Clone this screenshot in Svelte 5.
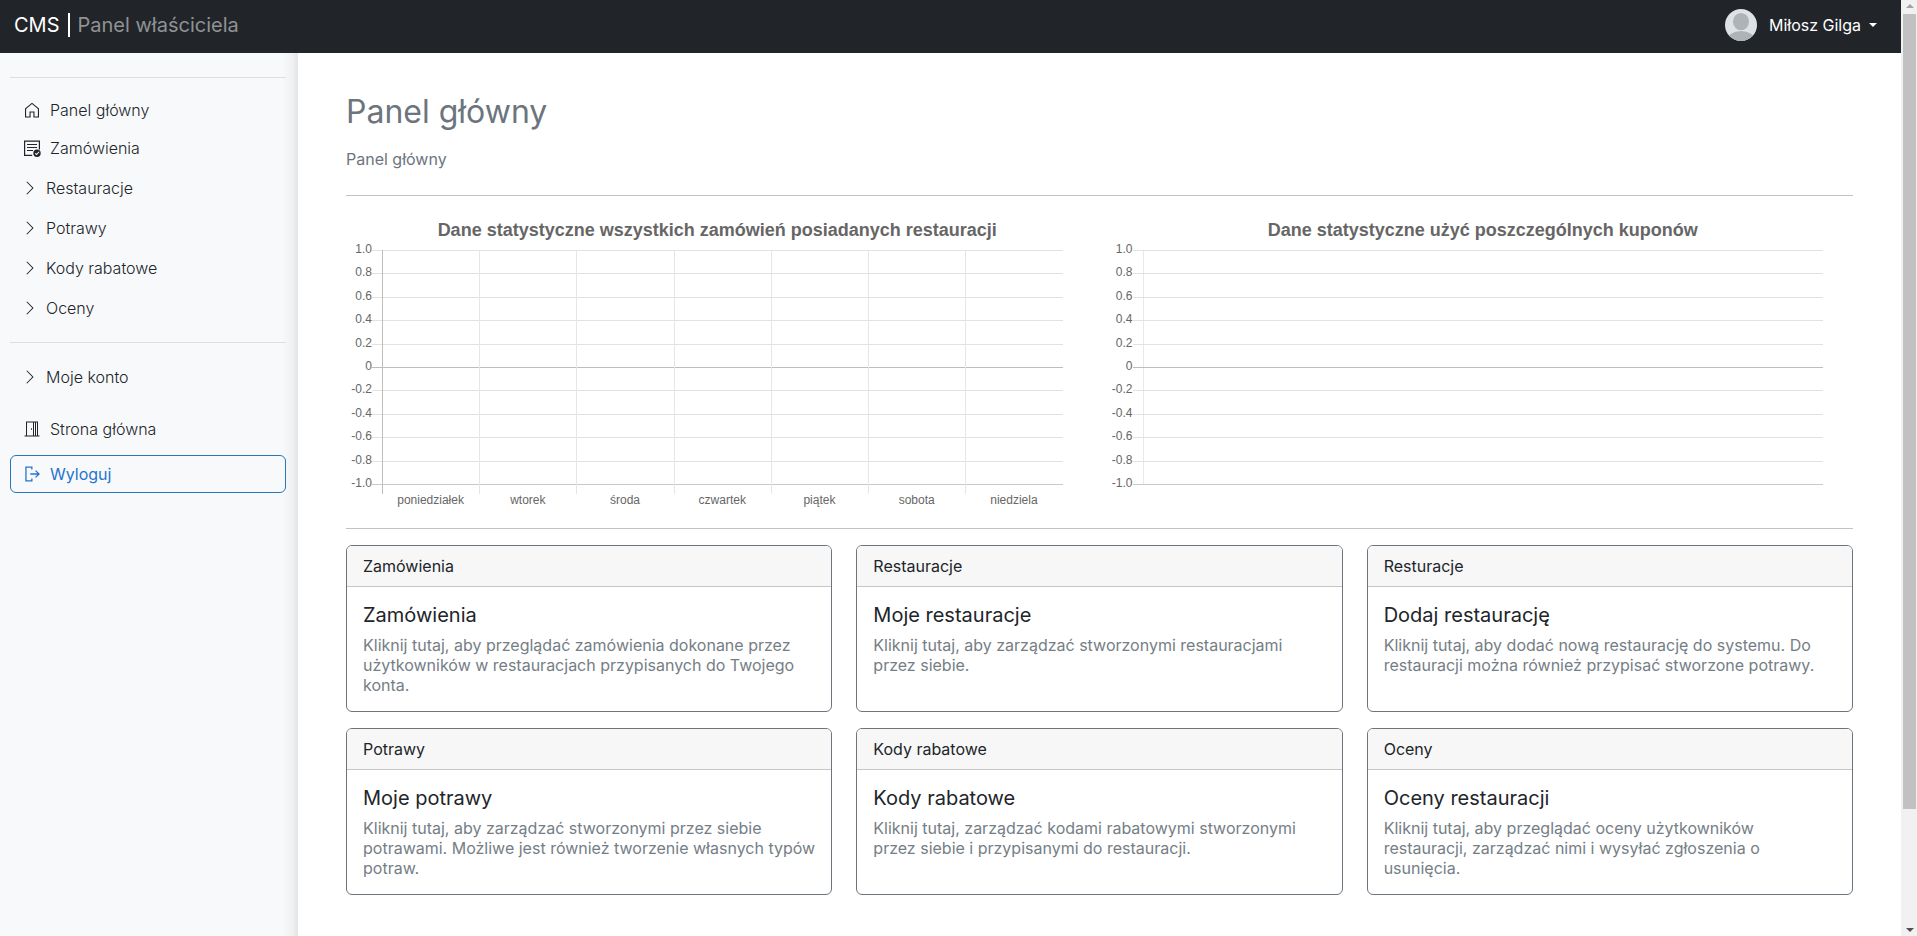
<script>
  const mainLinks = [
    { label: 'Panel główny', icon: 'home' },
    { label: 'Zamówienia', icon: 'orders' }
  ];
  const groups = ['Restauracje', 'Potrawy', 'Kody rabatowe', 'Oceny'];

  const ticks = ['1.0', '0.8', '0.6', '0.4', '0.2', '0', '-0.2', '-0.4', '-0.6', '-0.8', '-1.0'];
  const charts = [
    {
      title: 'Dane statystyczne wszystkich zamówień posiadanych restauracji',
      days: ['poniedziałek', 'wtorek', 'środa', 'czwartek', 'piątek', 'sobota', 'niedziela']
    },
    { title: 'Dane statystyczne użyć poszczególnych kuponów', days: [] }
  ];

  const cards = [
    {
      head: 'Zamówienia',
      title: 'Zamówienia',
      text: 'Kliknij tutaj, aby przeglądać zamówienia dokonane przez użytkowników w restauracjach przypisanych do Twojego konta.'
    },
    {
      head: 'Restauracje',
      title: 'Moje restauracje',
      text: 'Kliknij tutaj, aby zarządzać stworzonymi restauracjami przez siebie.'
    },
    {
      head: 'Resturacje',
      title: 'Dodaj restaurację',
      text: 'Kliknij tutaj, aby dodać nową restaurację do systemu. Do restauracji można również przypisać stworzone potrawy.'
    },
    {
      head: 'Potrawy',
      title: 'Moje potrawy',
      text: 'Kliknij tutaj, aby zarządzać stworzonymi przez siebie potrawami. Możliwe jest również tworzenie własnych typów potraw.'
    },
    {
      head: 'Kody rabatowe',
      title: 'Kody rabatowe',
      text: 'Kliknij tutaj, zarządzać kodami rabatowymi stworzonymi przez siebie i przypisanymi do restauracji.'
    },
    {
      head: 'Oceny',
      title: 'Oceny restauracji',
      text: 'Kliknij tutaj, aby przeglądać oceny użytkowników restauracji, zarządzać nimi i wysyłać zgłoszenia o usunięcia.'
    }
  ];
</script>

{#snippet icon(name)}
  <svg class="icon" viewBox="0 0 16 16" fill="currentColor" aria-hidden="true">
    {#if name === 'home'}
      <path d="M8 .7 1 6.6V15.6H6.6V10.6H9.4V15.6H15V6.600ZM8 2.1 13.900 7.100V14.500H10.500V9.500H5.500V14.500H2.100V7.100Z" fill-rule="evenodd" />
    {:else if name === 'orders'}
      <path d="M0 .5h16v9h-1.200v-7.800h-13.600v13h7v1.200h-8.200zM3 4h10v1H3zM3 7h10v1H3zM3 10h6v1H3z" />
      <path d="M13 9.500a3.700 3.700 0 1 1 0 7.400 3.700 3.700 0 0 1 0-7.400m1.700 2-2.100 2.300-1-.9-.7.8 1.700 1.500 2.900-3.100z" fill-rule="evenodd" />
    {:else if name === 'chevron'}
      <path d="M4.646 1.646a.5.5 0 0 1 .708 0l6 6a.5.5 0 0 1 0 .708l-6 6a.5.5 0 0 1-.708-.708L10.293 8 4.646 2.354a.5.5 0 0 1 0-.708" />
    {:else if name === 'door'}
      <path d="M2 .5h12V14.500h1.500v1H.5v-1H2ZM3 14.500h6V1.500H3ZM10 14.500h1V1.500h-1ZM12 14.500h1V1.500h-1Z" fill-rule="evenodd" />
      <path d="M7 7.200h1v1.600H7z" />
    {:else if name === 'exit'}
      <path d="M8.500 .4H1.300v15.200h7.200v-3.200H7.200v1.900H2.600V1.700h4.600v1.900h1.300zM12 4.200 16 8l-4 3.800-.9-.9 2.200-2.200H6.300V7.300h7l-2.200-2.200z" />
    {/if}
  </svg>
{/snippet}

<div class="shell">
  <div class="page">
    <header class="topbar">
      <a class="brand" href="#home">CMS<span class="bar"></span><span class="role">Panel właściciela</span></a>
      <button class="user" type="button">
        <svg class="avatar" viewBox="0 0 32 32" aria-hidden="true">
          <clipPath id="avatar-clip"><circle cx="16" cy="16" r="16" /></clipPath>
          <g clip-path="url(#avatar-clip)">
            <rect width="32" height="32" fill="#dfe2e4" />
            <ellipse cx="16" cy="12.600" rx="8" ry="8.600" fill="#adb3b7" />
            <ellipse cx="16" cy="31" rx="14" ry="9" fill="#adb3b7" />
          </g>
        </svg>
        Miłosz Gilga
        <span class="caret"></span>
      </button>
    </header>

    <div class="columns">
      <nav class="sidebar">
        <hr />
        <div class="links">
          {#each mainLinks as link}
            <a class="item" href="#{link.icon}">{@render icon(link.icon)}{link.label}</a>
          {/each}
        </div>
        {#each groups as group}
          <button class="item group" type="button">{@render icon('chevron')}{group}</button>
        {/each}
        <hr class="middle" />
        <button class="item group" type="button">{@render icon('chevron')}Moje konto</button>
        <div class="bottom">
          <a class="item" href="#site">{@render icon('door')}Strona główna</a>
          <button class="item logout" type="button">{@render icon('exit')}Wyloguj</button>
        </div>
      </nav>

      <main>
        <h1>Panel główny</h1>
        <p class="crumb">Panel główny</p>
        <hr />

        <section class="charts">
          {#each charts as chart}
            <figure class="chart">
              <figcaption class:wide={chart.days.length > 0}>{chart.title}</figcaption>
              <div class="ylabels">
                {#each ticks as tick}<span>{tick}</span>{/each}
              </div>
              <div class="plot">
                <div class="lines">
                  {#each ticks as tick}<i class:zero={tick === '0'}></i>{/each}
                </div>
                {#if chart.days.length}
                  <div class="slots">
                    {#each chart.days as day}<i></i>{/each}
                  </div>
                {/if}
              </div>
              <div class="xlabels">
                {#each chart.days as day}<span>{day}</span>{/each}
              </div>
            </figure>
          {/each}
        </section>
        <hr />

        <section class="cards">
          {#each cards as card}
            <article class="card">
              <header>{card.head}</header>
              <div class="body">
                <h2>{card.title}</h2>
                <p>{card.text}</p>
              </div>
            </article>
          {/each}
        </section>
      </main>
    </div>
  </div>

  <div class="scroll" aria-hidden="true">
    <span class="up"></span>
    <span class="thumb"></span>
    <span class="rest"></span>
    <span class="down"></span>
  </div>
</div>

<style>
  :global(body) {
    margin: 0;
    background: #fff;
    color: #212529;
    font: 400 16px/24px Inter, sans-serif;
  }
  * {
    box-sizing: border-box;
  }
  h1,
  h2,
  p,
  figure {
    margin: 0;
  }
  hr {
    width: 100%;
    height: 1px;
    margin: 0;
    border: 0;
    background: #c1c2c3;
  }
  a {
    color: inherit;
    text-decoration: none;
  }
  button {
    border: 0;
    background: none;
    color: inherit;
    font: inherit;
    cursor: pointer;
  }

  .shell {
    display: flex;
    min-height: 100vh;
  }
  .page {
    flex: 1;
    min-width: 0;
    display: flex;
    flex-direction: column;
  }

  .topbar {
    display: flex;
    align-items: center;
    justify-content: space-between;
    height: 53px;
    padding: 0 24px 4px 14px;
    background: #212529;
    color: #fff;
  }
  .brand {
    display: flex;
    align-items: center;
    font-size: 20px;
  }
  .bar {
    width: 2px;
    height: 24px;
    margin: 0 8px;
    background: #fff;
  }
  .role {
    color: #909294;
  }
  .user {
    display: flex;
    align-items: center;
    padding: 0;
  }
  .avatar {
    width: 32px;
    height: 32px;
    margin-right: 12px;
  }
  .caret {
    margin-left: 8px;
    border: 4px solid transparent;
    border-top-color: #fff;
    border-bottom: 0;
  }

  .columns {
    flex: 1;
    display: flex;
  }
  .sidebar {
    width: 298px;
    flex: none;
    padding: 24px 12px 24px 10px;
    background: linear-gradient(to left, #e3e4e6, #f0f1f3 6px, #f8f9fb 16px);
    color: #212529;
    font-weight: 300;
  }
  .sidebar hr {
    background: #dddfe2;
  }
  .links {
    padding: 13px 0 1px;
  }
  .sidebar .middle {
    margin: 14px 0;
  }
  .item {
    display: flex;
    align-items: center;
    gap: 10px;
    width: 100%;
    height: 38px;
    padding: 0 14px;
    border-radius: 6px;
    text-align: left;
  }
  .group {
    height: 40px;
    padding: 0 12px;
    gap: 8px;
  }
  .icon {
    width: 16px;
    height: 16px;
    flex: none;
    overflow: visible;
  }
  .bottom {
    display: flex;
    flex-direction: column;
    gap: 7px;
    padding-top: 13px;
  }
  .logout {
    padding: 0 13px;
    border: 1px solid #2a76bd;
    color: #2574d0;
    font-weight: 400;
  }

  main {
    flex: 1;
    min-width: 0;
    padding: 40px 48px;
  }
  h1 {
    color: #6c757d;
    font-size: 32px;
    font-weight: 400;
    line-height: 38px;
  }
  .crumb {
    margin: 16px 0 24px;
    color: #6c757d;
  }

  .charts {
    display: grid;
    grid-template-columns: 1fr 1fr;
    gap: 44px;
    padding: 20px 30px 22px 0;
    color: #666;
    font: 12px/14px 'Liberation Sans', Arial, sans-serif;
  }
  .chart {
    display: grid;
    grid-template-columns: 26px 1fr;
    grid-template-rows: 34px 244px 12px;
  }
  figcaption {
    grid-column: 1 / -1;
    padding-left: 36px;
    font-size: 18px;
    font-weight: 700;
    line-height: 28px;
    text-align: center;
  }
  .wide {
    padding-left: 26px;
  }
  .ylabels {
    display: flex;
    flex-direction: column;
    justify-content: space-between;
    height: 248px;
    margin-top: -8px;
    text-align: right;
  }
  .plot {
    display: grid;
  }
  .lines,
  .slots {
    grid-area: 1 / 1;
  }
  .lines {
    display: flex;
    flex-direction: column;
    justify-content: space-between;
    height: 235px;
    background: linear-gradient(#e9e9e9, #e9e9e9) 10px 0 / 1px 100% no-repeat;
  }
  .lines i {
    height: 1px;
    background: #e2e2e2;
  }
  .lines .zero {
    background: #bdbdbd;
  }
  .lines i:last-child {
    background: #c9c9c9;
  }
  .slots {
    display: grid;
    grid-template-columns: repeat(7, 1fr);
    height: 244px;
    margin-left: 10px;
  }
  .slots i {
    border-left: 1px solid #e6e6e6;
  }
  .slots i:first-child {
    border-left-color: #bdbdbd;
  }
  .xlabels {
    grid-column: 2;
    display: grid;
    grid-template-columns: repeat(7, 1fr);
    padding-left: 10px;
    line-height: 12px;
    text-align: center;
  }

  .cards {
    display: grid;
    grid-template-columns: repeat(3, 1fr);
    gap: 16px 24px;
    padding-top: 16px;
  }
  .card {
    border: 1px solid #6c757d;
    border-radius: 6px;
    overflow: hidden;
  }
  .card header {
    padding: 8px 16px;
    border-bottom: 1px solid #c4c6c8;
    background: #f7f7f7;
  }
  .body {
    padding: 16px;
  }
  h2 {
    margin-bottom: 8px;
    font-size: 20px;
    font-weight: 400;
    line-height: 24px;
  }
  .body p {
    color: #757e85;
    line-height: 20px;
  }

  .scroll {
    width: 16px;
    flex: none;
    display: flex;
    flex-direction: column;
    align-items: center;
    padding: 4px 1px 4px 2px;
    background: #f1f1f1;
  }
  .up,
  .down {
    border: 4px solid transparent;
  }
  .up {
    margin-bottom: 6px;
    border-top: 0;
    border-bottom-color: #a3a3a3;
  }
  .thumb {
    flex: 795;
    width: 100%;
    background: #c1c1c1;
  }
  .rest {
    flex: 119;
  }
  .down {
    border-bottom: 0;
    border-top-color: #505050;
  }
</style>
